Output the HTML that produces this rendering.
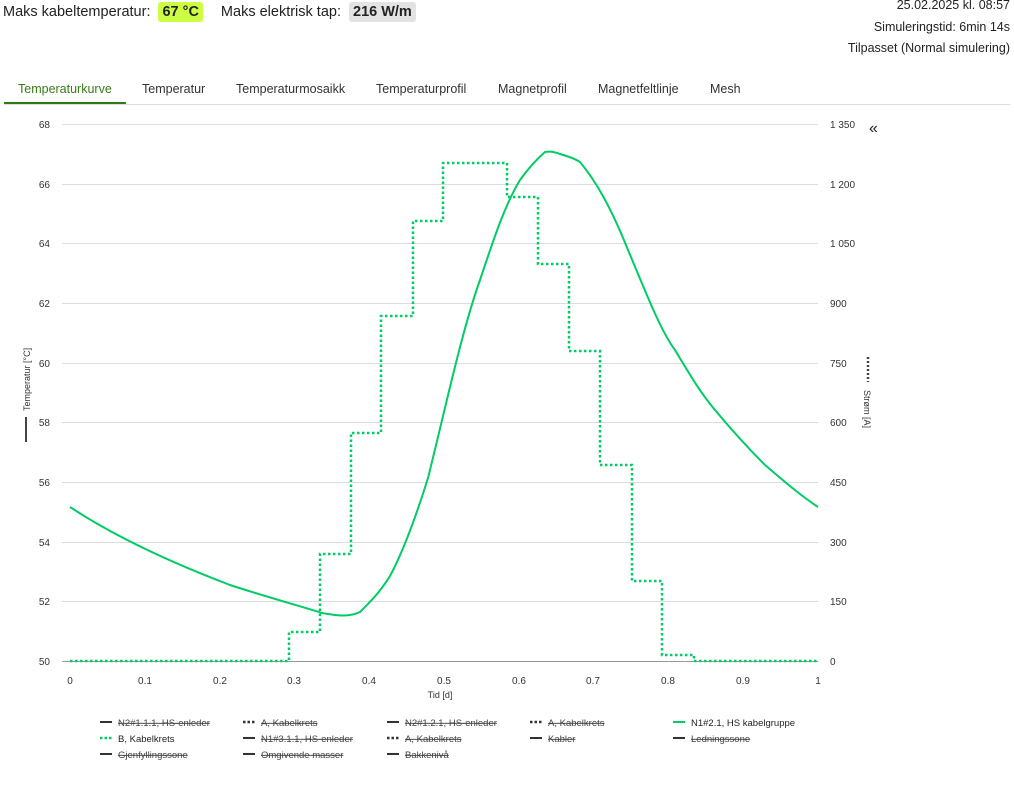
<!DOCTYPE html>
<html><head><meta charset="utf-8"><style>
body{margin:0;width:1014px;height:800px;background:#fff;font-family:"Liberation Sans",Arial,sans-serif;color:#222;overflow:hidden;position:relative}
.top{position:absolute;left:3px;top:2px;font-size:14.5px;display:flex;align-items:center}
.badge{font-weight:bold;padding:2px 4px;border-radius:3px;margin:0 18px 0 8px}
.right{position:absolute;right:4px;top:-5px;text-align:right;font-size:12.5px;line-height:21.5px}
.tabs{position:absolute;left:4px;top:80px;width:1006px;height:24px;border-bottom:1px solid #ddd;font-size:12.5px}
.tab{position:absolute;top:2px;color:#333}
</style></head><body>
<div class="top">Maks kabeltemperatur:<span class="badge" style="background:#ccff44">67 °C</span>Maks elektrisk tap:<span class="badge" style="background:#e3e3e3">216 W/m</span></div>
<div class="right">25.02.2025 kl. 08:57<br>Simuleringstid: 6min 14s<br>Tilpasset (Normal simulering)</div>
<div class="tabs">
<span class="tab" style="left:14px;color:#3b7a1a">Temperaturkurve</span>
<div style="position:absolute;left:0;top:22px;width:122px;height:2px;background:#2f7a14"></div>
<span class="tab" style="left:138px">Temperatur</span>
<span class="tab" style="left:232px">Temperaturmosaikk</span>
<span class="tab" style="left:372px">Temperaturprofil</span>
<span class="tab" style="left:494px">Magnetprofil</span>
<span class="tab" style="left:594px">Magnetfeltlinje</span>
<span class="tab" style="left:706px">Mesh</span>
</div>
<svg width="1014" height="800" style="position:absolute;left:0;top:0" font-family="Liberation Sans,Arial,sans-serif" font-size="10" fill="#333">
<g stroke="#ddd" stroke-width="1">
<line x1="62" y1="124.5" x2="818" y2="124.5"/><line x1="62" y1="184.5" x2="818" y2="184.5"/><line x1="62" y1="243.5" x2="818" y2="243.5"/><line x1="62" y1="303.5" x2="818" y2="303.5"/><line x1="62" y1="363.5" x2="818" y2="363.5"/><line x1="62" y1="422.5" x2="818" y2="422.5"/><line x1="62" y1="482.5" x2="818" y2="482.5"/><line x1="62" y1="542.5" x2="818" y2="542.5"/><line x1="62" y1="601.5" x2="818" y2="601.5"/>
</g>
<line x1="62" y1="661.5" x2="818" y2="661.5" stroke="#999"/>
<g text-anchor="end">
<text x="50" y="128">68</text><text x="50" y="188">66</text><text x="50" y="247">64</text><text x="50" y="307">62</text><text x="50" y="367">60</text><text x="50" y="426">58</text><text x="50" y="486">56</text><text x="50" y="546">54</text><text x="50" y="605">52</text><text x="50" y="665">50</text>
</g>
<g>
<text x="830" y="128">1 350</text><text x="830" y="188">1 200</text><text x="830" y="247">1 050</text><text x="830" y="307">900</text><text x="830" y="367">750</text><text x="830" y="426">600</text><text x="830" y="486">450</text><text x="830" y="546">300</text><text x="830" y="605">150</text><text x="830" y="665">0</text>
</g>
<text x="869" y="133" font-size="16" fill="#222">«</text>
<g text-anchor="middle">
<text x="70" y="684">0</text><text x="145" y="684">0.1</text><text x="220" y="684">0.2</text><text x="294" y="684">0.3</text><text x="369" y="684">0.4</text><text x="444" y="684">0.5</text><text x="519" y="684">0.6</text><text x="593" y="684">0.7</text><text x="668" y="684">0.8</text><text x="743" y="684">0.9</text><text x="818" y="684">1</text>
<text x="440" y="698" font-size="9">Tid [d]</text>
</g>
<text transform="translate(30,411) rotate(-90)" font-size="9">Temperatur [°C]</text>
<line x1="26" y1="417" x2="26" y2="442" stroke="#444" stroke-width="2"/>
<text transform="translate(864,390) rotate(90)" font-size="9">Strøm [A]</text>
<line x1="868" y1="357" x2="868" y2="382" stroke="#444" stroke-width="2.5" stroke-dasharray="2,2"/>
<polyline fill="none" stroke="#00cc66" stroke-width="2.5" stroke-dasharray="2.5,2.5" points="70,661 289,661 289,632 320,632 320,554 351,554 351,433 381,433 381,316 413,316 413,221 443,221 443,163 507,163 507,197 538,197 538,264 569,264 569,351 600,351 600,465 632,465 632,581 662,581 662,655 694,655 694,661 818,661"/>
<path fill="none" stroke="#00cc66" stroke-width="2" d="M70,507 C120,540 180,566 230,585 C270,598 300,606 322,613 C338,616 350,617 360,612 C372,600 380,592 390,576 C405,548 418,510 428,478 C445,410 462,330 480,280 C495,235 505,205 520,180 C530,166 538,158 545,152 C550,151 555,152 560,154 C566,156 572,157 580,162 C595,180 610,205 628,250 C645,290 660,330 675,350 C690,375 700,392 715,410 C730,428 745,445 765,465 C785,482 800,495 818,507"/>
<g font-size="9.5">
<g stroke="#333" stroke-width="2"><line x1="100" y1="722" x2="112" y2="722"/><line x1="387" y1="722" x2="399" y2="722"/><line x1="243" y1="738" x2="255" y2="738"/><line x1="530" y1="738" x2="542" y2="738"/><line x1="673" y1="738" x2="685" y2="738"/><line x1="100" y1="754" x2="112" y2="754"/><line x1="243" y1="754" x2="255" y2="754"/><line x1="387" y1="754" x2="399" y2="754"/></g>
<g stroke="#333" stroke-width="2.5" stroke-dasharray="2.5,2"><line x1="243" y1="722" x2="256" y2="722"/><line x1="530" y1="722" x2="543" y2="722"/><line x1="387" y1="738" x2="400" y2="738"/></g>
<line x1="673" y1="722" x2="685" y2="722" stroke="#00cc66" stroke-width="2"/>
<line x1="100" y1="738" x2="113" y2="738" stroke="#00cc66" stroke-width="2.5" stroke-dasharray="2.5,2"/>
<g text-decoration="line-through" fill="#444">
<text x="118" y="726">N2#1.1.1, HS-enleder</text><text x="261" y="726">A, Kabelkrets</text><text x="405" y="726">N2#1.2.1, HS-enleder</text><text x="548" y="726">A, Kabelkrets</text>
<text x="261" y="742">N1#3.1.1, HS-enleder</text><text x="405" y="742">A, Kabelkrets</text><text x="548" y="742">Kabler</text><text x="691" y="742">Ledningssone</text>
<text x="118" y="758">Gjenfyllingssone</text><text x="261" y="758">Omgivende masser</text><text x="405" y="758">Bakkenivå</text>
</g>
<text x="691" y="726" fill="#222">N1#2.1, HS kabelgruppe</text>
<text x="118" y="742" fill="#222">B, Kabelkrets</text>
</g>
</svg>
</body></html>
